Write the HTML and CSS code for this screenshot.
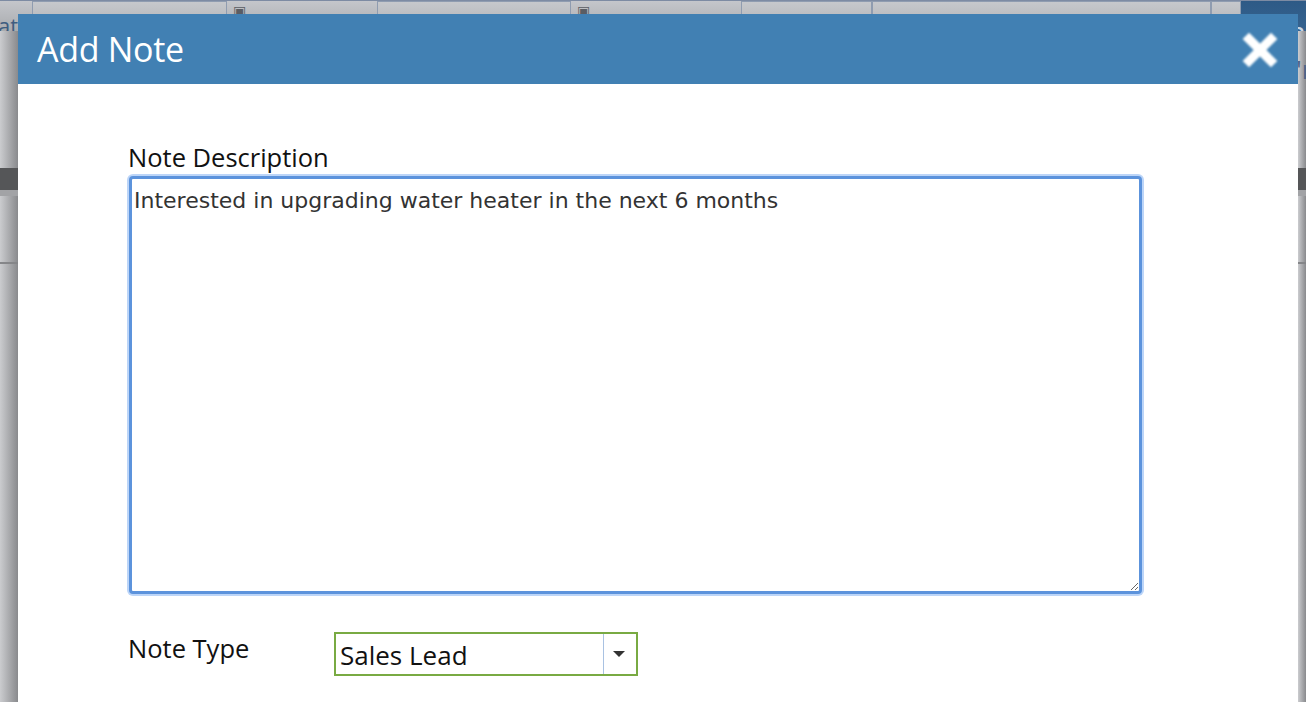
FILE: index.html
```html
<!DOCTYPE html>
<html lang="en">
<head>
    <meta charset="UTF-8">
    <title>Add Note</title>
    <link rel="stylesheet" href="styles.css">
</head>
<body>
<div class="page">
    <div class="toolbar">
        <span class="crumb">ate</span>
        <div class="field wide"></div>
        <div class="cal">&#9635;</div>
        <div class="field wide"></div>
        <div class="cal">&#9635;</div>
        <div class="field mid"></div>
        <div class="field long"></div>
        <div class="field tiny"></div>
        <div class="search-btn">a</div>
    </div>
    <div class="side-left">
        <div class="band"></div>
        <div class="line"></div>
    </div>
    <div class="side-right">
        <span class="peek">'r</span>
        <div class="band"></div>
        <div class="line"></div>
    </div>
</div>

<div class="modal">
    <div class="modal-header">
        <h2>Add Note</h2>
        <button class="close" type="button">
            <svg width="36" height="36" viewBox="0 0 36 36">
                <path d="M7 7 L29 29 M29 7 L7 29" stroke="#fff" stroke-width="9" stroke-linecap="square"/>
            </svg>
        </button>
    </div>
    <div class="modal-body">
        <label for="desc" class="desc-label">Note Description</label>
        <textarea id="desc" class="desc">Interested in upgrading water heater in the next 6 months</textarea>

        <div class="row">
            <label for="type" class="type-label">Note Type</label>
            <div class="select">
                <span class="select-value">Sales Lead</span>
                <span class="select-arrow"></span>
            </div>
        </div>
    </div>
</div>
</body>
</html>
```

FILE: styles.css
```css
html, body {
    margin: 0;
    height: 100%;
    overflow: hidden;
}

body {
    background: #9c9da0;
    font-family: "Open Sans", sans-serif;
}

.page {
    position: relative;
    height: 100%;
}

/* the dimmed page behind the dialog */
.toolbar {
    display: flex;
    align-items: flex-start;
    height: 30px;
    background: linear-gradient(#c4c6cb, #a9abae);
    border-top: 1px solid #7d8ba3;
}

.crumb {
    color: #3e5d80;
    font-size: 22px;
    line-height: 48px;
    width: 35px;
    overflow: hidden;
    text-indent: -2px;
}

.field {
    height: 28px;
    border: 1px solid #8f9cb0;
    background: linear-gradient(#c6c8cc, #b0b2b5);
}

.field.wide { width: 208px; }
.field.mid { width: 140px; margin-left: 20px; }
.field.long { width: 364px; }
.field.tiny { width: 30px; }

.cal {
    width: 155px;
    color: #5a5d63;
    font-size: 14px;
    padding-left: 6px;
}

.search-btn {
    margin-left: auto;
    width: 70px;
    height: 62px;
    background: linear-gradient(#2e5a86, #3d6d9b);
    color: #c9d6e4;
    font-size: 30px;
    text-align: right;
    line-height: 62px;
}

.side-left, .side-right {
    position: absolute;
    top: 31px;
    bottom: 0;
    background: linear-gradient(90deg, #cbcccf, #898a8d);
}

.side-left { left: 0; width: 18px; }
.side-right { right: 0; width: 8px; }

.band {
    margin-top: 137px;
    height: 22px;
    background: #555658;
    border-bottom: 6px solid #a2a3a6;
}

.line {
    margin-top: 66px;
    height: 2px;
    background: #858689;
}

.peek {
    position: absolute;
    top: 20px;
    left: -2px;
    color: #4c6488;
    font-size: 26px;
}

/* dialog */
.modal {
    position: absolute;
    left: 18px;
    top: 14px;
    width: 1280px;
    bottom: 0;
    background: #fff;
}

.modal-header {
    display: flex;
    align-items: center;
    justify-content: space-between;
    height: 70px;
    padding: 0 20px 0 19px;
    background: #4180b3;
}

.modal-header h2 {
    margin: 0;
    color: #fff;
    font-size: 34px;
    font-weight: 400;
    letter-spacing: -0.3px;
}

.close {
    background: none;
    border: none;
    padding: 0;
    margin-top: 4px;
    filter: blur(0.8px);
    cursor: pointer;
}

.modal-body {
    padding: 58px 0 0 110px;
}

.desc-label {
    display: block;
    font-size: 25.5px;
    color: #111;
    line-height: 30px;
    margin-bottom: 4px;
}

.desc {
    display: block;
    box-sizing: border-box;
    width: 1013px;
    height: 418px;
    margin-left: 1px;
    padding: 9px 2px 7px;
    border: 3px solid #5c93dc;
    border-radius: 4px;
    box-shadow: 0 0 0 2px #bcd5f8;
    outline: none;
    resize: both;
    font-family: "DejaVu Sans", Verdana, sans-serif;
    font-size: 22px;
    color: #333;
    line-height: 26px;
}

.row {
    display: flex;
    align-items: center;
    margin-top: 38px;
}

.type-label {
    width: 206px;
    font-size: 25.5px;
    color: #111;
    margin-top: -12px;
}

.select {
    display: flex;
    align-items: stretch;
    box-sizing: border-box;
    width: 304px;
    height: 44px;
    border: 2px solid #79aa43;
}

.select-value {
    flex: 1;
    padding: 2px 0 0 4px;
    font-size: 26px;
    line-height: 38px;
    color: #111;
}

.select-arrow {
    position: relative;
    width: 32px;
    border-left: 1px solid #a9c2e2;
}

.select-arrow::after {
    content: "";
    position: absolute;
    left: 9px;
    top: 17px;
    border-left: 6px solid transparent;
    border-right: 6px solid transparent;
    border-top: 6px solid #333;
}
```
